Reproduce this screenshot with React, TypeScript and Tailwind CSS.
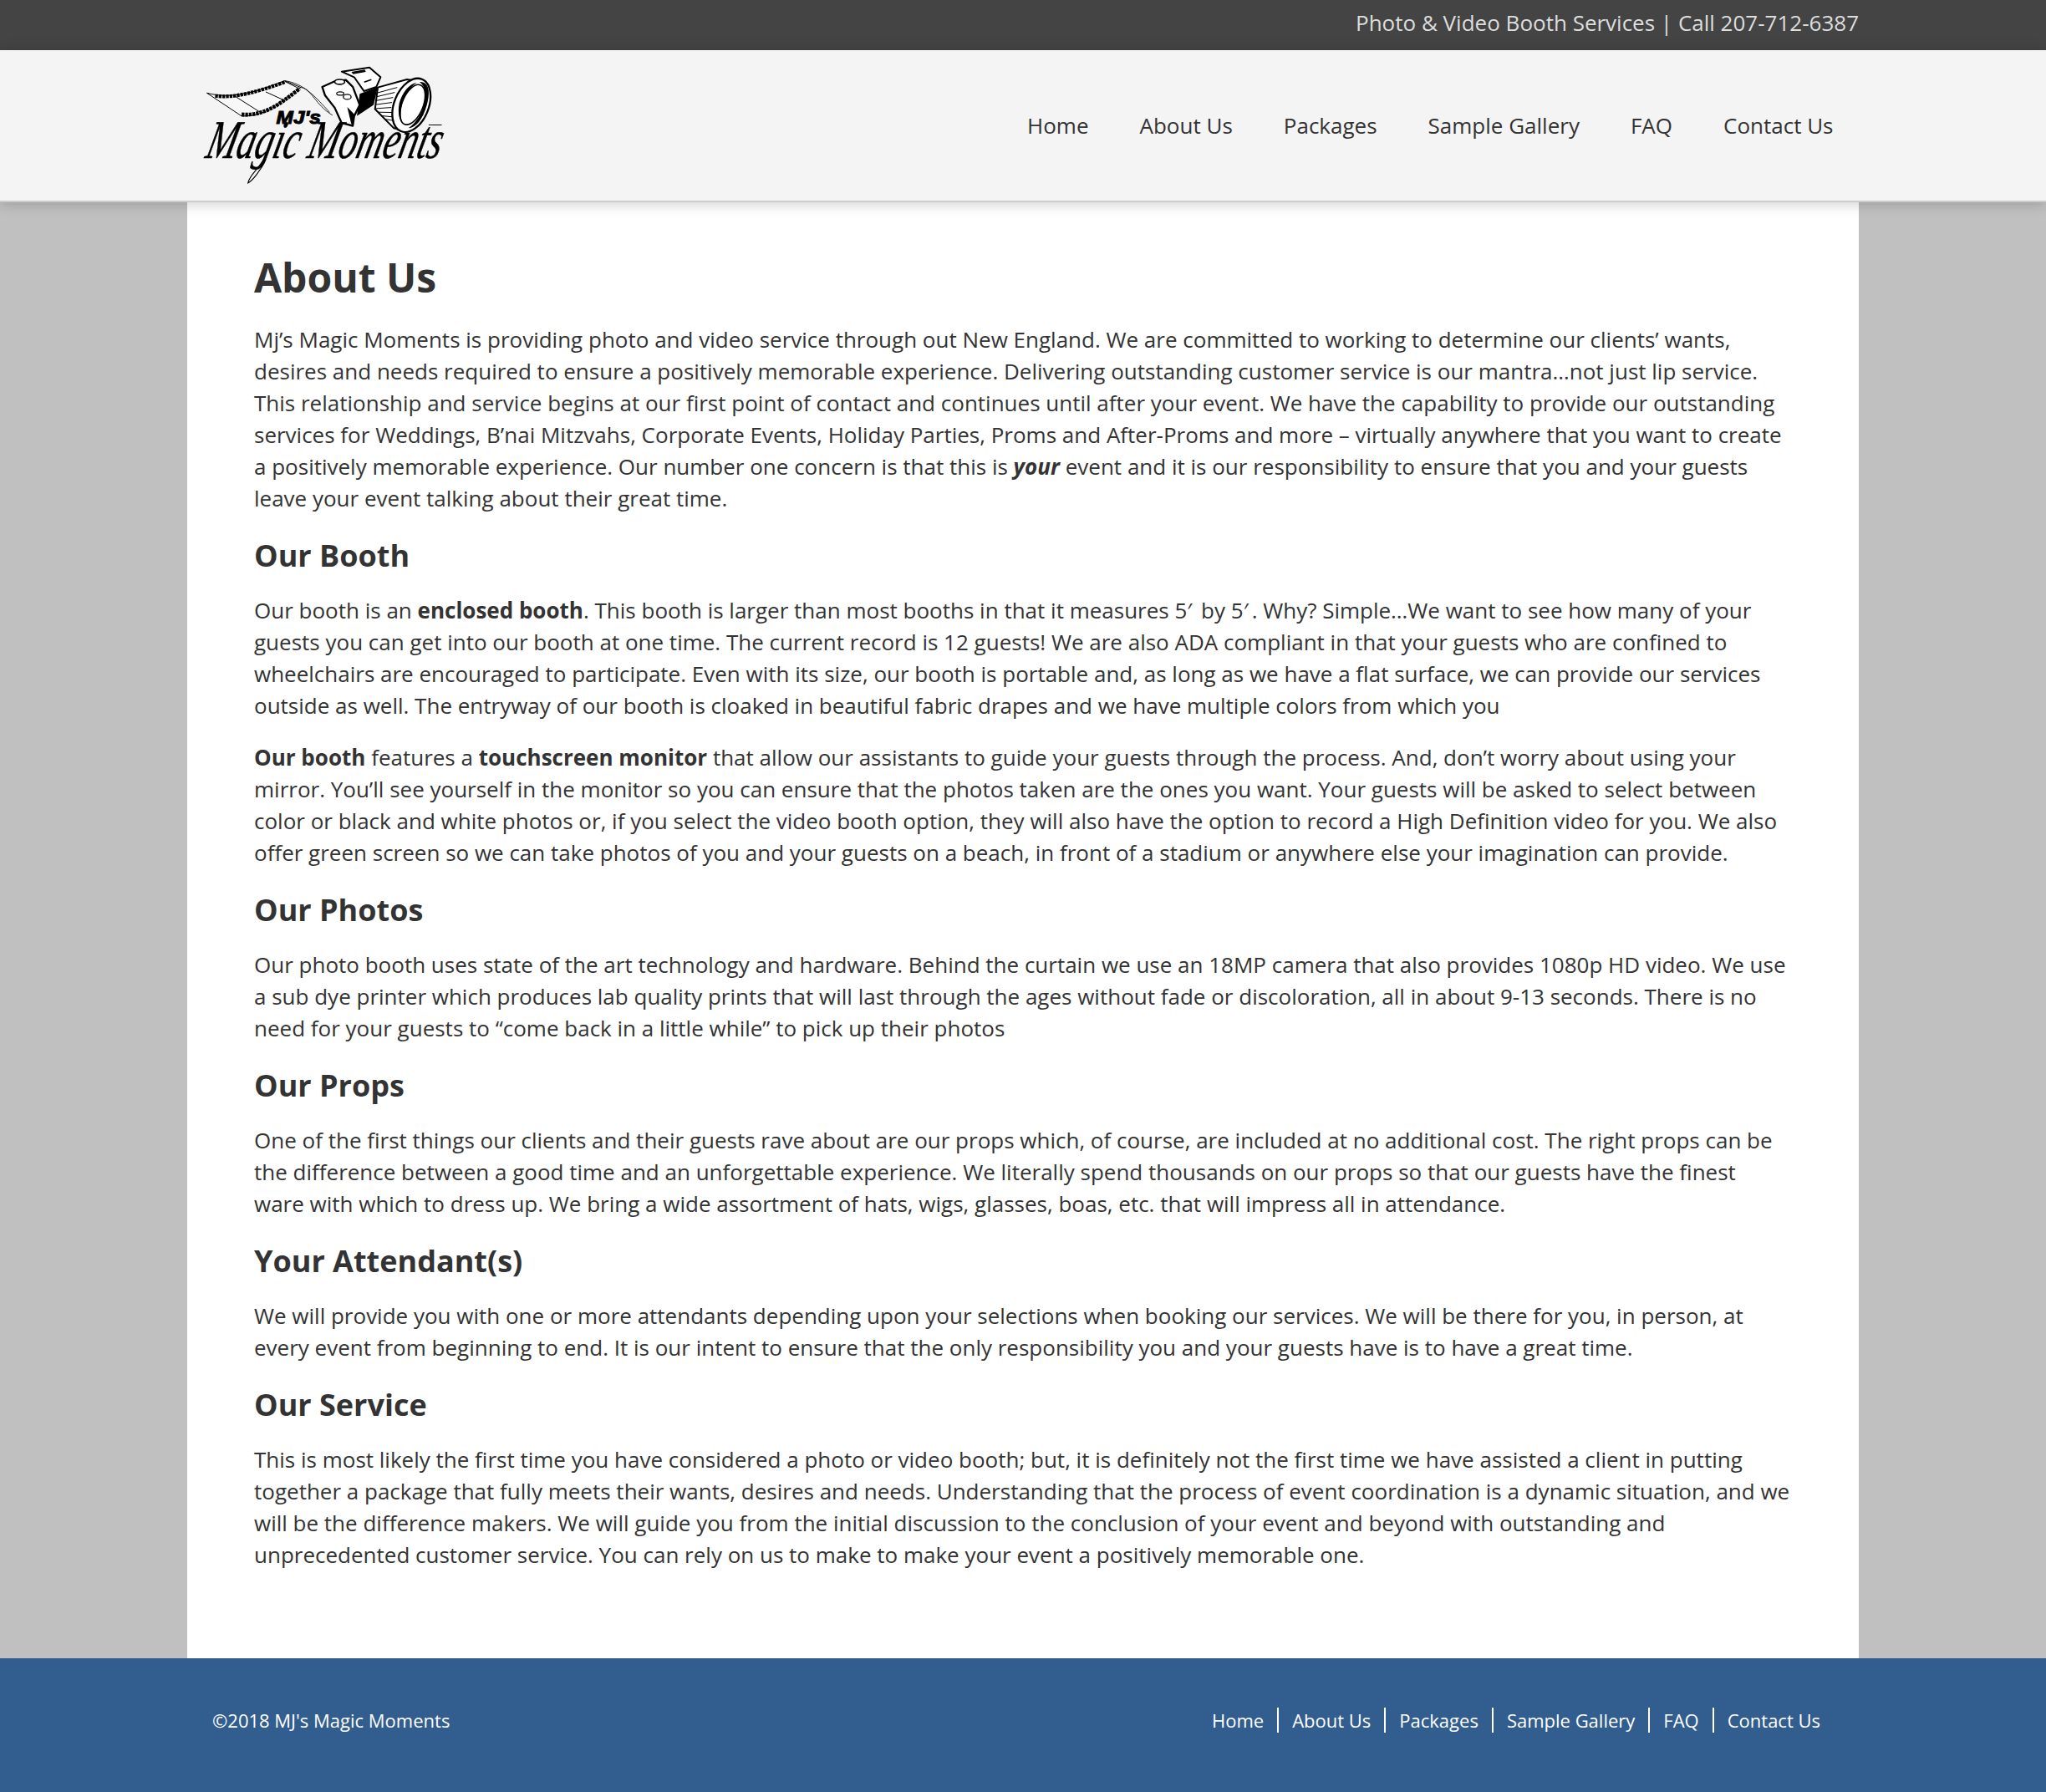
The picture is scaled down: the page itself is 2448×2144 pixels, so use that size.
import React from 'react';

const navItems = ['Home', 'About Us', 'Packages', 'Sample Gallery', 'FAQ', 'Contact Us'];

const Logo: React.FC = () => (
  <svg viewBox="130 115 865 430" className="w-[288px] h-[143px] block overflow-visible" aria-label="MJ's Magic Moments">
    {/* film strip */}
    <path d="M140 212 C230 236 320 208 420 168 L478 192 C400 250 350 298 265 295 Z" fill="#f8f8f8" stroke="#000" strokeWidth="3" />
    <path d="M170 222 C240 232 320 208 420 173" fill="none" stroke="#000" strokeWidth="13" strokeDasharray="10 3" />
    <path d="M265 289 C345 296 400 254 474 196" fill="none" stroke="#000" strokeWidth="14" strokeDasharray="10 3" />
    <path d="M245 226 L330 280 M352 208 L422 240 M420 170 L470 195" fill="none" stroke="#000" strokeWidth="3" />
    <path d="M420 168 C490 178 530 225 582 282 M478 192 C515 195 530 255 592 292" fill="none" stroke="#000" strokeWidth="2.5" />
    {/* lens barrel */}
    <path d="M755 192 L860 163 L905 170 L860 350 L812 338 L745 270 Z" fill="#fff" stroke="#000" strokeWidth="6" strokeLinejoin="round" />
    <path d="M752 212 L825 192 M748 226 L816 210 M746 240 L810 228 M746 254 L806 246 M748 268 L804 264 M756 281 L806 282 M768 294 L810 298 M780 306 L815 312" stroke="#000" strokeWidth="3" fill="none" />
    {/* lens front */}
    <ellipse cx="876" cy="256" rx="62" ry="101" transform="rotate(22 876 256)" fill="#fff" stroke="#000" strokeWidth="7" />
    <ellipse cx="880" cy="254" rx="38" ry="76" transform="rotate(22 880 254)" fill="#fff" stroke="#000" strokeWidth="5" />
    <path d="M905 172 C945 170 945 220 925 275 C908 320 885 338 865 338 C895 320 925 270 925 220 C925 195 918 182 905 172 Z" fill="#000" />
    <path d="M832 250 C842 212 868 178 895 175 C868 192 848 225 840 265 C836 290 838 310 848 325 C832 312 826 285 832 250 Z" fill="#000" />
    {/* camera body */}
    <path d="M690 215 L755 190 L740 255 L680 295 Z" fill="#000" />
    <path d="M625 135 L725 120 L765 155 L750 190 L705 205 L670 155 Z" fill="#fff" stroke="#000" strokeWidth="6" strokeLinejoin="round" />
    <path d="M660 136 L708 128 L712 136 L666 144 Z" fill="#000" />
    <path d="M706 173 L732 164" stroke="#000" strokeWidth="5" />
    <path d="M555 190 L600 170 L640 165 L665 190 L690 255 L670 295 L665 330 L625 320 L600 265 L565 220 Z" fill="#fff" stroke="#000" strokeWidth="7" strokeLinejoin="round" />
    <ellipse cx="618" cy="172" rx="18" ry="9" fill="#fff" stroke="#000" strokeWidth="5" />
    <ellipse cx="620" cy="214" rx="13" ry="6" fill="none" stroke="#000" strokeWidth="3.5" />
    <ellipse cx="645" cy="226" rx="14" ry="9" fill="none" stroke="#000" strokeWidth="4" />
    <path d="M645 262 L660 325 L668 325 L672 290 Z" fill="#000" />
    {/* lettering */}
    <text x="390" y="323" fontFamily="'Liberation Sans', sans-serif" fontWeight="700" fontStyle="italic" fontSize="68" textLength="160" lengthAdjust="spacingAndGlyphs" fill="#000" stroke="#000" strokeWidth="3">MJ's</text>
    <text transform="translate(130 445) skewX(-14)" fontFamily="'Liberation Serif', serif" fontStyle="italic" fontSize="196" textLength="845" lengthAdjust="spacingAndGlyphs" fill="#000" stroke="#000" strokeWidth="1.5">Magic Moments</text>
    <path d="M938 327 L985 327" stroke="#000" strokeWidth="3" fill="none" />
    <path d="M352 435 C335 480 292 505 288 536 C302 530 335 490 352 450" fill="none" stroke="#000" strokeWidth="3.5" />
  </svg>
);

const Prime: React.FC = () => <span className="mr-1">′</span>;

const Heading: React.FC<{ children: React.ReactNode }> = ({ children }) => (
  <h2 className="text-[36px] leading-[44px] font-bold mt-[28px] mb-[24px]">{children}</h2>
);

const Para: React.FC<{ children: React.ReactNode }> = ({ children }) => <p className="mb-6">{children}</p>;

export default function App() {
  return (
    <div className="bg-[#c0c0c0] min-h-[2144px] font-['Open_Sans',sans-serif] text-[#333333]">
      <div className="h-[60px] bg-[#444444]">
        <div className="w-[2000px] mx-auto h-full pb-1.5 flex items-center justify-end text-[26px] text-[#dddddd]">
          Photo &amp; Video Booth Services | Call 207-712-6387
        </div>
      </div>
      <header className="relative z-10 h-[182px] bg-[#f4f4f4] border-b-2 border-[#cccccc] shadow-[0_2px_16px_rgba(0,0,0,0.2)]">
        <div className="w-[2000px] mx-auto h-[180px] flex items-center justify-between pl-5">
          <a href="#" className="block">
            <Logo />
          </a>
          <nav className="flex">
            {navItems.map((item) => (
              <a key={item} href="#" className="px-[30.5px] text-[26px] leading-[40px] text-[#333333]">
                {item}
              </a>
            ))}
          </nav>
        </div>
      </header>
      <main className="w-[2000px] mx-auto bg-white pt-[61px] pb-[105px] pl-20 pr-[82px] text-[26px] leading-[38px] flow-root">
        <h1 className="text-[48px] leading-[58px] font-bold mb-[26px]">About Us</h1>
        <Para>
          Mj’s Magic Moments is providing photo and video service through out New England. We are committed to working to determine our clients’ wants, desires and needs required to ensure a positively memorable experience. Delivering outstanding customer service is our mantra…not just lip service. This relationship and service begins at our first point of contact and continues until after your event. We have the capability to provide our outstanding services for Weddings, B’nai Mitzvahs, Corporate Events, Holiday Parties, Proms and After-Proms and more – virtually anywhere that you want to create a positively memorable experience. Our number one concern is that this is <strong className="italic">your</strong> event and it is our responsibility to ensure that you and your guests leave your event talking about their great time.
        </Para>
        <Heading>Our Booth</Heading>
        <Para>
          Our booth is an <strong>enclosed booth</strong>. This booth is larger than most booths in that it measures 5<Prime /> by 5<Prime />. Why? Simple…We want to see how many of your guests you can get into our booth at one time. The current record is 12 guests! We are also ADA compliant in that your guests who are confined to wheelchairs are encouraged to participate. Even with its size, our booth is portable and, as long as we have a flat surface, we can provide our services outside as well. The entryway of our booth is cloaked in beautiful fabric drapes and we have multiple colors from which you
        </Para>
        <Para>
          <strong>Our booth</strong> features a <strong>touchscreen monitor</strong> that allow our assistants to guide your guests through the process. And, don’t worry about using your mirror. You’ll see yourself in the monitor so you can ensure that the photos taken are the ones you want. Your guests will be asked to select between color or black and white photos or, if you select the video booth option, they will also have the option to record a High Definition video for you. We also offer green screen so we can take photos of you and your guests on a beach, in front of a stadium or anywhere else your imagination can provide.
        </Para>
        <Heading>Our Photos</Heading>
        <Para>
          Our photo booth uses state of the art technology and hardware. Behind the curtain we use an 18MP camera that also provides 1080p HD video. We use a sub dye printer which produces lab quality prints that will last through the ages without fade or discoloration, all in about 9-13 seconds. There is no need for your guests to “come back in a little while” to pick up their photos
        </Para>
        <Heading>Our Props</Heading>
        <Para>
          One of the first things our clients and their guests rave about are our props which, of course, are included at no additional cost. The right props can be the difference between a good time and an unforgettable experience. We literally spend thousands on our props so that our guests have the finest ware with which to dress up. We bring a wide assortment of hats, wigs, glasses, boas, etc. that will impress all in attendance.
        </Para>
        <Heading>Your Attendant(s)</Heading>
        <Para>
          We will provide you with one or more attendants depending upon your selections when booking our services. We will be there for you, in person, at every event from beginning to end. It is our intent to ensure that the only responsibility you and your guests have is to have a great time.
        </Para>
        <Heading>Our Service</Heading>
        <p>
          This is most likely the first time you have considered a photo or video booth; but, it is definitely not the first time we have assisted a client in putting together a package that fully meets their wants, desires and needs. Understanding that the process of event coordination is a dynamic situation, and we will be the difference makers. We will guide you from the initial discussion to the conclusion of your event and beyond with outstanding and unprecedented customer service. You can rely on us to make to make your event a positively memorable one.
        </p>
      </main>
      <footer className="h-[160px] bg-[#325d8f] text-white text-[22px] font-medium">
        <div className="w-[2000px] h-full mx-auto px-[30px] pb-3 flex items-center justify-between">
          <span>©2018 MJ's Magic Moments</span>
          <nav className="flex">
            {navItems.map((item, i) => (
              <a
                key={item}
                href="#"
                className={`px-4 leading-[30px] ${i < navItems.length - 1 ? 'border-r-2 border-white' : ''}`}
              >
                {item}
              </a>
            ))}
          </nav>
        </div>
      </footer>
    </div>
  );
}
